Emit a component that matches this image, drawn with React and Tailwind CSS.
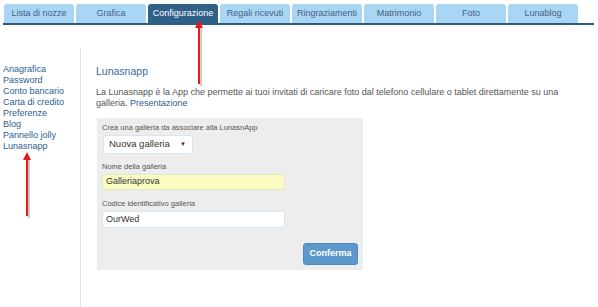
import React from 'react';

const tabs = ['Lista di nozze', 'Grafica', 'Configurazione', 'Regali ricevuti', 'Ringraziamenti', 'Matrimonio', 'Foto', 'Lunablog'];
const links = ['Anagrafica', 'Password', 'Conto bancario', 'Carta di credito', 'Preferenze', 'Blog', 'Pannello jolly', 'Lunasnapp'];

function Arrow({ className, height }) {
  return (
    <svg className={className} width="14" height={height + 4} viewBox={`0 0 14 ${height + 4}`}>
      <line x1="8" y1="8" x2="8" y2={height + 2} stroke="#9a9a9a" strokeWidth="2" opacity="0.5" />
      <line x1="6" y1="6" x2="6" y2={height} stroke="#e21b1b" strokeWidth="2" />
      <polygon points="6,0 2,8 10,8" fill="#e21b1b" />
    </svg>
  );
}

export default function App() {
  return (
    <div className="relative w-[598px] h-[307px] overflow-hidden bg-white font-['Liberation_Sans',Arial,sans-serif]">
      {/* Tabs */}
      <div className="flex gap-[2px] pl-[4px] pt-[4px]">
        {tabs.map((t) => (
          <div
            key={t}
            className={
              t === 'Configurazione'
                ? 'w-[70px] h-[19px] rounded-t-[3px] bg-[#2f6189] text-white text-[9px] flex items-center justify-center'
                : 'w-[70px] h-[19px] rounded-t-[3px] bg-[#a8d6f4] text-[#46627e] text-[9px] flex items-center justify-center'
            }
          >
            {t}
          </div>
        ))}
      </div>
      <div className="ml-[3px] w-[591px] h-[2px] bg-[#2d5a80]" />

      <div className="flex mt-[23px] h-[259px]">
        {/* Sidebar */}
        <div className="w-[80px] pl-[3px] pt-[16px] text-[9px] leading-[11px] text-[#2b5e92]">
          {links.map((l) => (
            <div key={l}>{l}</div>
          ))}
        </div>

        {/* Main */}
        <div className="flex-1 border-l border-[#e3e3e3] pl-[15px] pt-[17px]">
          <div className="text-[10.5px] leading-[12px] text-[#3a6a98]">Lunasnapp</div>
          <p className="mt-[10px] w-[480px] text-[9px] leading-[11px] text-[#555]">
            La Lunasnapp è la App che permette ai tuoi invitati di caricare foto dal telefono cellulare o tablet direttamente su una galleria. <span className="text-[#2b5e92]">Presentazione</span>
          </p>

          <div className="mt-[9px] ml-[1px] w-[266px] h-[152px] bg-[#ededed] px-[5px] pt-[5px] flex flex-col">
            <div className="text-[7.5px] leading-[10px] text-[#555]">Crea una galleria da associare alla LunasnApp</div>
            <div className="mt-[2px] ml-[1px] w-[90px] h-[19px] bg-white border border-[#d6e6f2] rounded-[3px] flex items-center justify-between pl-[5px] pr-[6px] text-[9.5px] text-[#333]">
              <span>Nuova galleria</span>
              <span className="text-[6px]">▼</span>
            </div>
            <div className="mt-[8px] text-[7.5px] leading-[10px] text-[#555]">Nome della galleria</div>
            <div className="mt-[2px] w-[183px] h-[16px] bg-[#fbfbc4] border border-[#e8e8c0] rounded-[2px] flex items-center pl-[3px] text-[9px] text-[#333]">
              Galleriaprova
            </div>
            <div className="mt-[9px] text-[7.5px] leading-[10px] text-[#555]">Codice identificativo galleria</div>
            <div className="mt-[2px] w-[183px] h-[17px] bg-white border border-[#d6e6f2] rounded-[2px] flex items-center pl-[3px] text-[9px] text-[#333]">
              OurWed
            </div>
            <div className="mt-auto mb-[5px] self-end w-[55px] h-[22px] rounded-[3px] bg-[#5d98cd] border border-[#4f88bd] text-white text-[9px] font-bold flex items-center justify-center">
              Conferma
            </div>
          </div>
        </div>
      </div>

      {/* Red arrows */}
      <Arrow className="absolute left-[193px] top-[20px]" height={64} />
      <Arrow className="absolute left-[21px] top-[152px]" height={64} />
    </div>
  );
}
